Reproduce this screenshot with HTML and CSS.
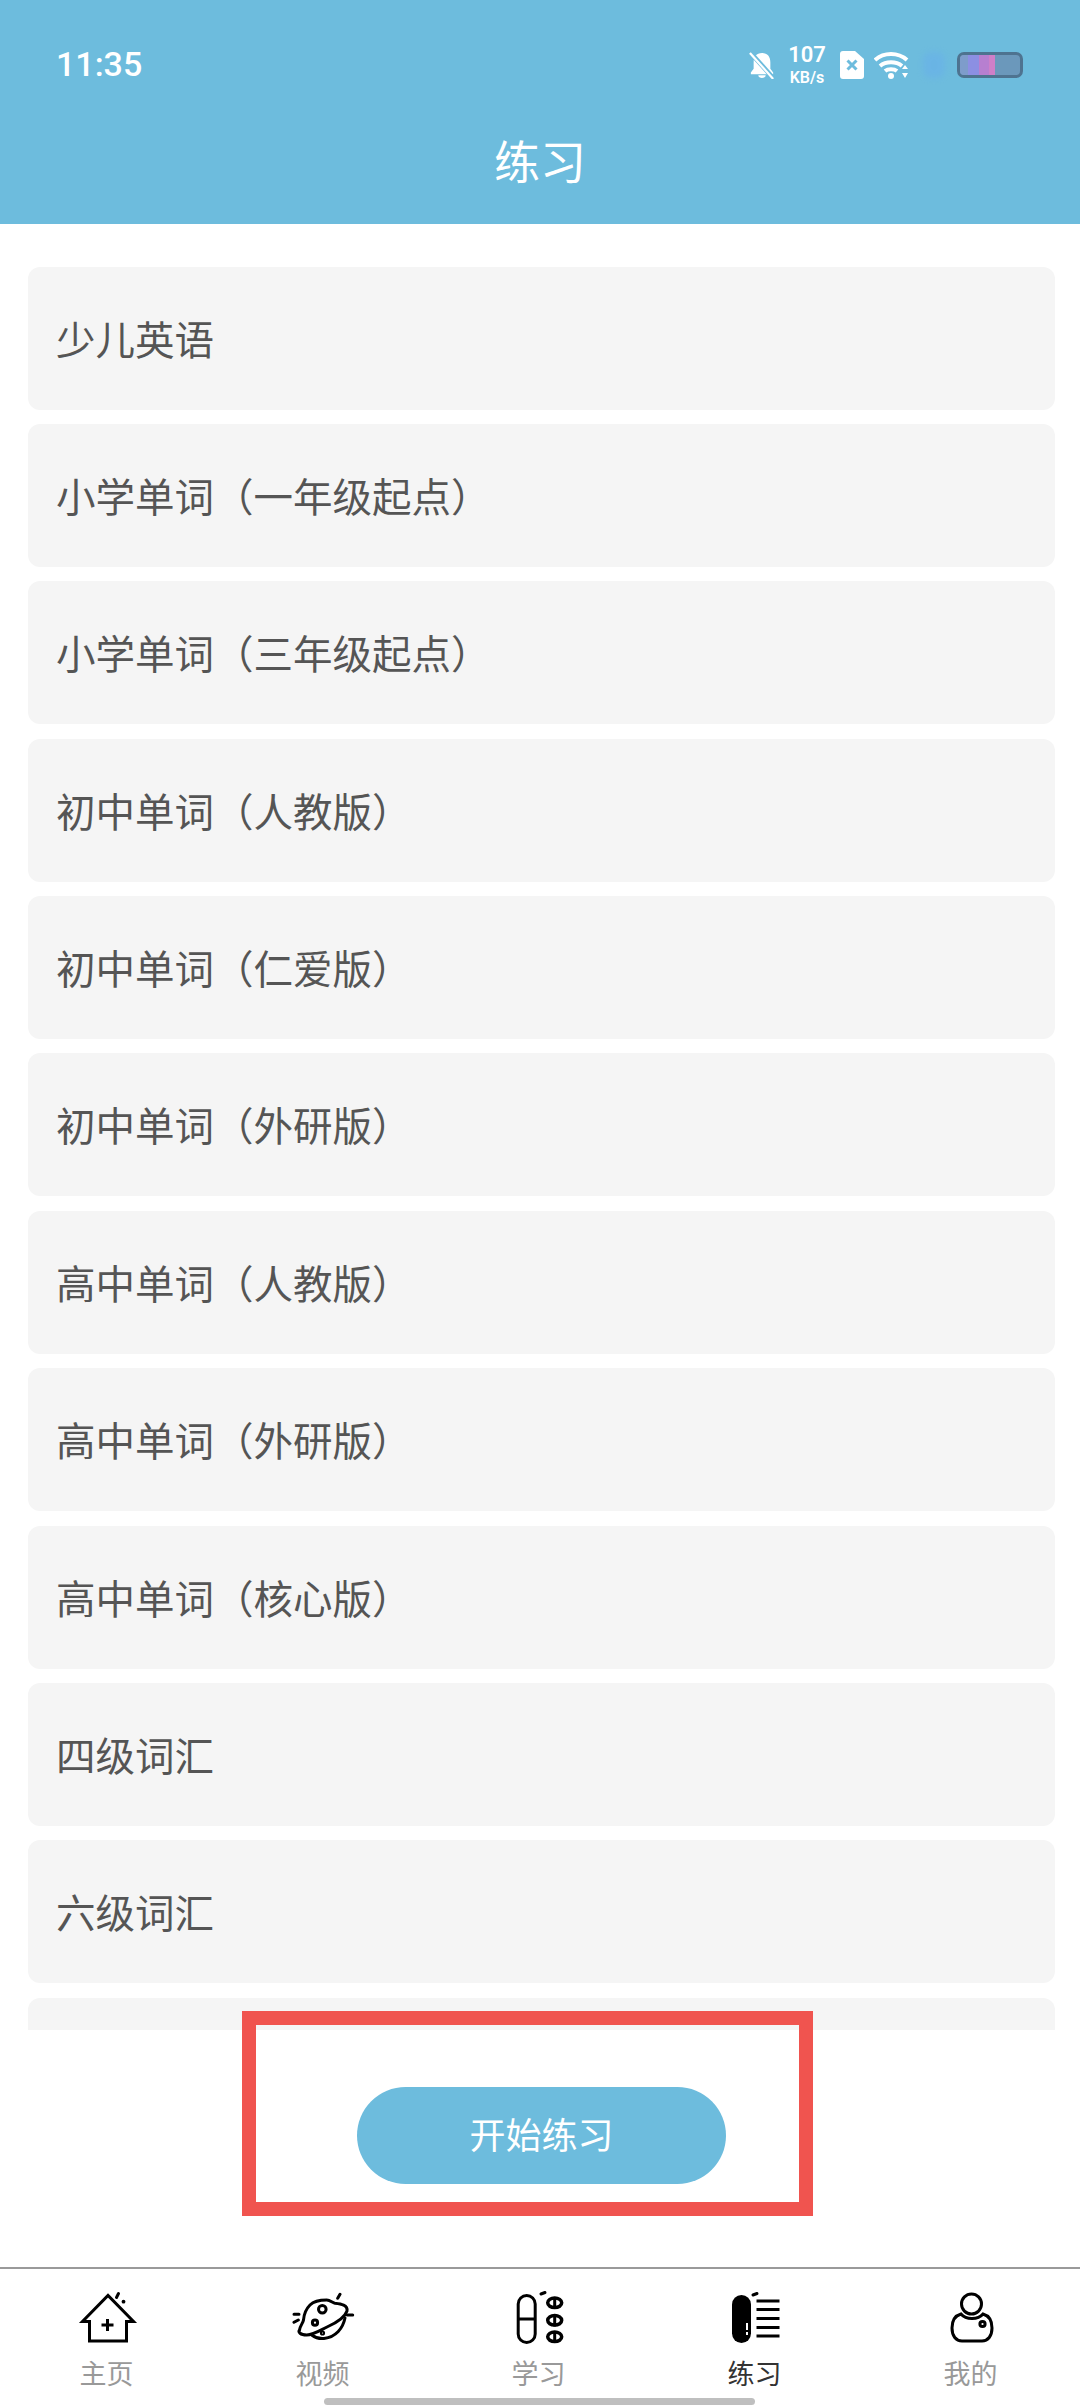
FILE: index.html
```html
<!DOCTYPE html>
<html lang="zh-CN">
<head>
<meta charset="utf-8">
<title>练习</title>
<link rel="stylesheet" href="styles.css">
</head>
<body>
<div class="page">
  <header class="header">
    <div class="status">
      <span class="time">11:35</span>
      <div class="status-icons">
        <svg class="ic-bell" viewBox="0 0 28 30"><path fill="#fff" d="M14 2c6 0 9 4 9 10v7l3 4v2H2v-2l3-4v-7c0-6 3-10 9-10zM10 26h8c0 2-2 3-4 3s-4-1-4-3z"/><path stroke="#6dbcdd" stroke-width="5" d="M1 1l25 28"/><path stroke="#fff" stroke-width="2.4" d="M1 2l25 28"/></svg>
        <div class="speed"><span class="speed-num">107</span><span class="speed-unit">KB/s</span></div>
        <svg class="ic-sim" viewBox="0 0 24 28"><path fill="#fff" d="M3 0h12l9 8v17a3 3 0 0 1-3 3H3a3 3 0 0 1-3-3V3a3 3 0 0 1 3-3z"/><path stroke="#6dbcdd" stroke-width="3" d="M7.500 9.500l9 9M16.500 9.500l-9 9"/></svg>
        <svg class="ic-wifi" viewBox="0 0 36 28"><g fill="none" stroke="#fff" stroke-width="4"><path d="M1 9c9-8 23-8 32 0"/><path d="M6 15c6-5 16-5 22 0"/><path d="M11 20c3-2.500 9-2.500 12 0"/></g><circle cx="17" cy="25" r="3" fill="#fff"/><path fill="#fff" d="M31 14l3 4h-6zM31 27l3-5h-6z"/></svg>
        <span class="smudge"></span>
        <div class="battery"><span class="charge"></span></div>
      </div>
    </div>
    <h1 class="title">练习</h1>
  </header>

  <main class="list">
    <div class="card">少儿英语</div>
    <div class="card">小学单词（一年级起点）</div>
    <div class="card">小学单词（三年级起点）</div>
    <div class="card">初中单词（人教版）</div>
    <div class="card">初中单词（仁爱版）</div>
    <div class="card">初中单词（外研版）</div>
    <div class="card">高中单词（人教版）</div>
    <div class="card">高中单词（外研版）</div>
    <div class="card">高中单词（核心版）</div>
    <div class="card">四级词汇</div>
    <div class="card">六级词汇</div>
    <div class="card"></div>
  </main>

  <section class="action">
    <button class="start">开始练习</button>
    <span class="annotation"></span>
  </section>

  <nav class="tabs">
    <div class="tab">
      <svg class="tab-icon" viewBox="0 0 64 60"><g fill="none" stroke="#000" stroke-width="3"><path d="M13.500 33.500H6.500L32 7.500l25.500 26H50.500V53h-37z"/><path d="M31.500 31v12M25.500 37h12"/><path stroke-linecap="round" d="M42.500 5.500L40.500 9.500"/></g><circle cx="47.500" cy="13.700" r="1.900"/></svg>
      <span class="tab-label">主页</span>
    </div>
    <div class="tab">
      <svg class="tab-icon" viewBox="0 0 64 60"><g fill="none" stroke="#000" stroke-width="3" stroke-linecap="round" stroke-linejoin="round"><path d="M18 17c4-4 10-5 16.700-5 3.300 0 6.300 3 8.300 3.300 6 .7 13 1.700 12 7.700-2 6-11 12-20 16-8 4-14 8-20.300 8-6.700 0-8.700-3-7.200-5 .5-4 3.500-7 4-10 .5-6 2.500-11 6.500-15z"/><path d="M53 30c-2 10-9 19-21 20.500-5 .5-9-1-12.300-3.500"/><circle cx="30.300" cy="21.300" r="3.800"/><circle cx="23" cy="34.700" r="2.600"/><circle cx="30.500" cy="45" r="1.600" stroke-width="2"/><path d="M48 6.300l-2.300 4M55.300 27h5.400M2 26.300h5M2 34.300l4.300-2.300"/></g></svg>
      <span class="tab-label">视频</span>
    </div>
    <div class="tab">
      <svg class="tab-icon" viewBox="0 0 64 60"><g fill="none" stroke="#000" stroke-width="3"><rect x="10.200" y="7.500" width="17" height="47" rx="8.500"/><path d="M10.200 31h17"/><ellipse cx="46.700" cy="14.800" rx="7" ry="4.800" stroke-width="3.500"/><ellipse cx="46.700" cy="32.300" rx="7" ry="4.800" stroke-width="3.500"/><ellipse cx="46.700" cy="48.800" rx="7" ry="4.800" stroke-width="3.500"/><path stroke-width="3" d="M46.700 9v12M46.700 26.500v12M46.700 43v12"/><path stroke-linecap="round" d="M33 6l4-1.500"/></g></svg>
      <span class="tab-label">学习</span>
    </div>
    <div class="tab tab-active">
      <svg class="tab-icon" viewBox="0 0 64 60"><rect x="8" y="7" width="19" height="48" rx="9.500"/><path stroke="#fff" stroke-width="2" d="M23 35v7M23 44v3"/><g fill="none" stroke="#000" stroke-width="3"><path d="M32.500 13h23M32.500 21.500h23M32.500 30.500h23M32.500 39.500h23M32.500 48h23"/><path stroke-linecap="round" d="M29 7l4-1.500"/></g></svg>
      <span class="tab-label">练习</span>
    </div>
    <div class="tab">
      <svg class="tab-icon" viewBox="0 0 64 60"><g fill="none" stroke="#000" stroke-width="3"><circle cx="31.500" cy="16" r="10"/><path d="M21 26c-7 2-9 8-9 14 0 8 4 13 10 13h20c6 0 10-5 10-13 0-6-2-12-9-14-5 6-17 6-22 0z"/><circle cx="42.500" cy="36" r="2.600"/></g></svg>
      <span class="tab-label">我的</span>
    </div>
    <span class="home-bar"></span>
  </nav>
</div>
</body>
</html>
```

FILE: styles.css
```css
* { box-sizing: border-box; }
html, body { margin: 0; padding: 0; background: #fff; }
body { font-family: "Noto Sans CJK SC", "Noto Sans", sans-serif; }

.page { width: 1080px; height: 2408px; display: flex; flex-direction: column; overflow: hidden; }

.header { height: 224px; flex: none; background: #6dbcdd; color: #fff; display: flex; flex-direction: column; }
.status { height: 126px; flex: none; display: flex; justify-content: space-between; align-items: flex-start; padding: 42px 57px 0 56px; }
.time { font-family: Roboto, sans-serif; font-weight: 500; font-size: 34px; line-height: 44px; }
.status-icons { display: flex; align-items: center; height: 46px; }
.ic-bell { width: 26px; height: 28px; margin-right: 13px; }
.speed { display: flex; flex-direction: column; align-items: center; width: 38px; font-family: Roboto, sans-serif; font-weight: 600; color: #fff; margin-right: 14px; }
.speed-num { font-size: 22px; line-height: 22px; }
.speed-unit { font-size: 16px; line-height: 17px; margin-top: 3px; }
.ic-sim { width: 24px; height: 28px; margin-right: 10px; }
.ic-wifi { width: 36px; height: 28px; margin-right: 13px; }
.smudge { width: 22px; height: 26px; background: #68b0ea; border-radius: 8px; opacity: .6; filter: blur(3px); margin-right: 12px; }
.battery { width: 66px; height: 26px; border: 3px solid #4e7390; border-radius: 7px; background: #6b98bb; overflow: hidden; }
.charge { display: block; width: 35px; height: 100%; background: linear-gradient(90deg, #7e9ccb 0 22%, #8c8fe3 22% 55%, #b77fd0 55% 82%, #cf7fc8 82%); }
.title { margin: 3px 0 0; font-size: 46px; line-height: 60px; font-weight: 400; text-align: center; }

.list { height: 1806px; flex: none; padding: 42.5px 25px 0 28px; display: flex; flex-direction: column; gap: 14.4px; overflow: hidden; }
.card { height: 143px; flex: none; background: #f5f5f5; border-radius: 12px; color: #555; font-size: 39.5px; line-height: 141px; padding-left: 28px; }

.action { position: relative; height: 237px; flex: none; display: flex; justify-content: center; padding-top: 57px; }
.start { width: 369px; height: 97px; border: 0; border-radius: 49px; background: #6dbcdd; color: #fff; font: 400 36px/93px "Noto Sans CJK SC", sans-serif; padding: 0 0 4px; margin-left: 3px; }
.annotation { position: absolute; left: 242px; top: -19px; width: 571px; height: 205px; border: 14px solid #f0544f; }

.tabs { position: relative; flex: 1; border-top: 2px solid #9a9a9a; display: grid; grid-template-columns: repeat(5, 1fr); }
.tab { display: flex; flex-direction: column; align-items: center; padding-top: 19px; color: #999; }
.tab-active { color: #333; }
.tab-icon { width: 64px; height: 60px; flex: none; }
.tab-label { font-size: 27px; line-height: 36px; margin: 7px 3px 0 0; }
.home-bar { position: absolute; left: 324px; top: 129px; width: 431px; height: 7px; border-radius: 4px; background: #bfbfbf; }
```
